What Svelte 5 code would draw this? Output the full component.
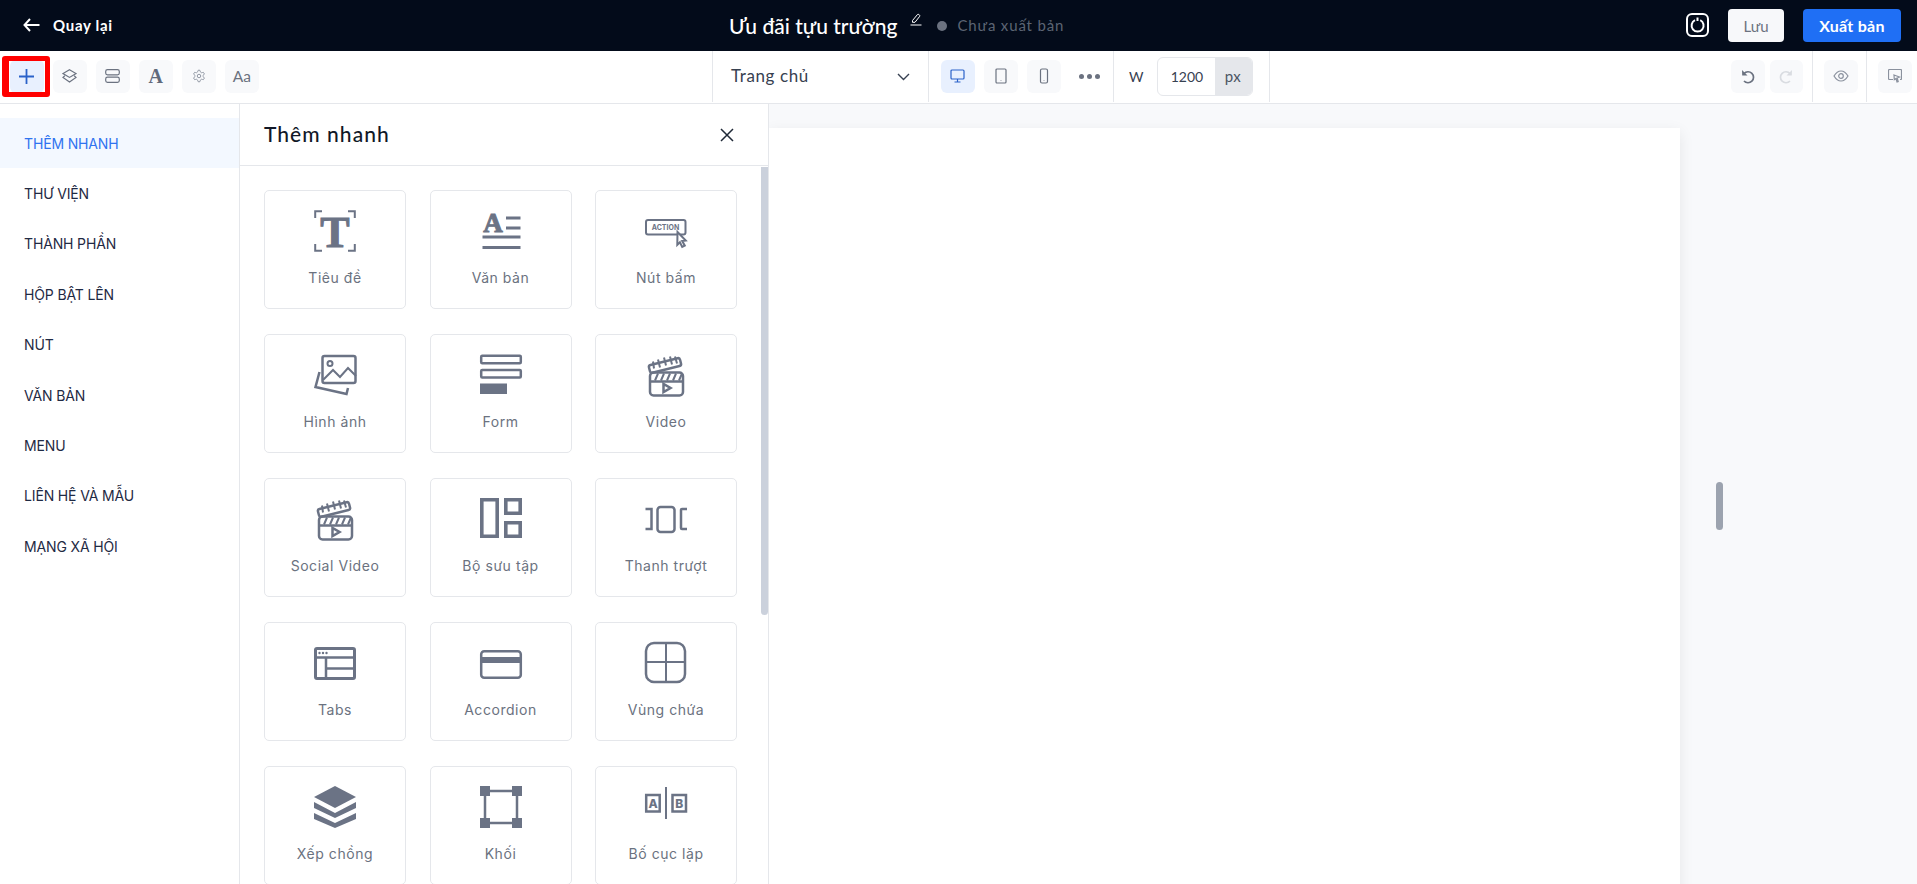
<script>
  const menu = ['THÊM NHANH','THƯ VIỆN','THÀNH PHẦN','HỘP BẬT LÊN','NÚT','VĂN BẢN','MENU','LIÊN HỆ VÀ MẪU','MẠNG XÃ HỘI'];
  const items = [
    ['title','Tiêu đề'],['text','Văn bản'],['button','Nút bấm'],
    ['image','Hình ảnh'],['form','Form'],['video','Video'],
    ['video','Social Video'],['gallery','Bộ sưu tập'],['slider','Thanh trượt'],
    ['tabs','Tabs'],['accordion','Accordion'],['container','Vùng chứa'],
    ['stack','Xếp chồng'],['block','Khối'],['repeat','Bố cục lặp']
  ];
</script>

{#snippet icon(name)}
  <svg class="ico" viewBox="0 0 42 42" aria-hidden="true">
    {#if name === 'title'}
      <path class="s" d="M1.200 8V1.200H8M34 1.200h6.800V8M1.200 34v6.800H8M34 40.800h6.800V34"/>
      <text class="serif tt" x="21" y="37" text-anchor="middle" font-size="44">T</text>
    {:else if name === 'text'}
      <text class="serif tt" x="13" y="21.500" text-anchor="middle" font-size="27">A</text>
      <path class="s3" d="M26 8h14.500M26 18h14.500M2.500 27h38M2.500 37.500h38"/>
    {:else if name === 'button'}
      <rect class="s2" x="1" y="10" width="39.500" height="14.500" rx="2"/>
      <text class="act" x="20.500" y="20" text-anchor="middle">ACTION</text>
      <path class="arrow" d="M32.500 22l8.300 8.500-3.600.6 2.600 4.600-2.600 1.300-2.300-4.700-2.600 2.600z"/>
    {:else if name === 'image'}
      <rect class="s25" x="8.500" y="2" width="33" height="27" rx="2"/>
      <circle class="s" cx="16" cy="9.500" r="2.500"/>
      <path class="s" d="M9 26l10-10 7 7 8-9 8 8"/>
      <path class="s25" d="M5.500 18L1.500 33l31 7 1.500-6"/>
    {:else if name === 'form'}
      <rect class="s25" x="1.200" y="1.700" width="39.600" height="7.600" rx="1"/>
      <rect class="s25" x="1.200" y="16" width="39.600" height="7.600" rx="1"/>
      <rect class="f" x="0" y="29.500" width="27" height="10.500"/>
    {:else if name === 'video'}
      <g transform="translate(3 0.500)">
        <rect class="s25" x="2" y="18" width="33" height="23" rx="3.500"/>
        <path class="s25" d="M2 27h33"/>
        <path class="s2" d="M7 26l3-7M13 26l3-7M19 26l3-7M25 26l3-7M31 26l3-7"/>
        <rect class="s25" x="1" y="7" width="32" height="8" rx="2" transform="rotate(-14 17 11)"/>
        <path class="s2" d="M6 14l-1-7M12 13l-2-8M18 11l-2-8M24 10l-2-8M29 9l-2-7"/>
        <path class="s25" d="M15.500 29.500v8l7-4z"/>
      </g>
    {:else if name === 'gallery'}
      <path class="s35" d="M1.800 1.800h15.400v36.400H1.800zM25.800 1.800h14.400v13.400H25.800zM25.800 24.800h14.400v13.400H25.800z"/>
    {:else if name === 'slider'}
      <rect class="s25" x="12.500" y="9" width="17" height="25" rx="3"/>
      <path class="s25" d="M0.500 11h6v20h-6M42 11h-5a1 1 0 0 0-1 1v18a1 1 0 0 0 1 1h5"/>
    {:else if name === 'tabs'}
      <rect class="s3" x="1.500" y="6.500" width="39" height="30" rx="1.500"/>
      <path class="s25" d="M1 15.500h40M12 15.500v21M12 26.500h29"/>
      <circle class="f" cx="5.500" cy="11" r="1.200"/><circle class="f" cx="9" cy="11" r="1.200"/><circle class="f" cx="12.500" cy="11" r="1.200"/>
    {:else if name === 'accordion'}
      <rect class="s25" x="1.200" y="9.200" width="39.600" height="26.600" rx="3"/>
      <rect class="f" x="1" y="15" width="40" height="6"/>
    {:else if name === 'container'}
      <rect class="s25" x="1" y="1" width="39" height="39" rx="8"/>
      <path class="s2" d="M21 1v39M1 20h39"/>
    {:else if name === 'stack'}
      <path class="f" d="M21 0l21 11-21 11L0 11z"/>
      <path class="f" d="M0 16l21 11 21-11v6L21 32 0 22zM0 27l21 10 21-10v6L21 42 0 33z"/>
    {:else if name === 'block'}
      <path class="s25" d="M5 5h32v32H5z"/>
      <path class="f" d="M0 0h10v10H0zM32 0h10v10H32zM0 32h10v10H0zM32 32h10v10H32z"/>
    {:else if name === 'repeat'}
      <rect class="s25" x="1.200" y="9" width="13.500" height="16.500"/>
      <rect class="s25" x="27.500" y="9" width="13.500" height="16.500"/>
      <path class="s2" d="M21 1v32"/>
      <text class="ab" x="8" y="22" text-anchor="middle">A</text>
      <text class="ab" x="34.300" y="22" text-anchor="middle">B</text>
    {/if}
  </svg>
{/snippet}

<div class="app">
  <header class="topbar">
    <div class="back">
      <svg width="17" height="14" viewBox="0 0 17 14" class="wh"><path d="M7 1L1.500 7 7 13M1.500 7H16.500"/></svg>
      <span>Quay lại</span>
    </div>
    <div class="doc">
      <span class="title">Ưu đãi tựu trường</span>
      <svg width="12" height="13" viewBox="0 0 12 13" class="pen"><path d="M2.500 7.500L7.500 1.500c.8-.7 2.800 .6 2.200 1.800L5 9.300H2.500zM0.500 12h11"/></svg>
      <i class="dot"></i>
      <span class="status">Chưa xuất bản</span>
    </div>
    <div class="actions">
      <svg width="23" height="24" viewBox="0 0 23 24" class="wh2">
        <rect x="1" y="1" width="21" height="22" rx="5"/>
        <path d="M9 7.200a6 6 0 1 0 5.200 0M11.500 4.500v3.500"/>
      </svg>
      <button class="save">Lưu</button>
      <button class="publish">Xuất bản</button>
    </div>
  </header>

  <div class="toolbar">
    <section class="tools">
      <button class="tb plus">
        <svg width="15" height="15" viewBox="0 0 15 15"><path d="M7.500 0v15M0 7.500h15" stroke="#2a62c9" stroke-width="1.800" fill="none"/></svg>
      </button>
      <button class="tb">
        <svg width="15" height="14" viewBox="0 0 15 14" class="ti"><path d="M7.500 .8l6.500 3.800-6.500 3.800L1 4.600zM2.800 6.700L1 8.400 7.500 13 14 8.400l-1.800-1.700"/></svg>
      </button>
      <button class="tb">
        <svg width="15" height="14" viewBox="0 0 15 14" class="ti"><rect x=".7" y=".7" width="13.600" height="5.100" rx="1.800"/><rect x=".7" y="8.200" width="13.600" height="5.100" rx="1.800"/></svg>
      </button>
      <button class="tb big-a">A</button>
      <button class="tb">
        <svg width="14" height="14" viewBox="0 0 24 24" class="gear"><circle cx="12" cy="12" r="3"/><path d="M12.220 2h-.44a2 2 0 0 0-2 2v.18a2 2 0 0 1-1 1.730l-.43.25a2 2 0 0 1-2 0l-.15-.08a2 2 0 0 0-2.730.73l-.22.38a2 2 0 0 0 .73 2.730l.15.1a2 2 0 0 1 1 1.720v.51a2 2 0 0 1-1 1.740l-.15.09a2 2 0 0 0-.73 2.730l.22.38a2 2 0 0 0 2.730.73l.15-.08a2 2 0 0 1 2 0l.43.25a2 2 0 0 1 1 1.730V20a2 2 0 0 0 2 2h.44a2 2 0 0 0 2-2v-.18a2 2 0 0 1 1-1.730l.43-.25a2 2 0 0 1 2 0l.15.08a2 2 0 0 0 2.730-.73l.22-.39a2 2 0 0 0-.73-2.730l-.15-.08a2 2 0 0 1-1-1.740v-.5a2 2 0 0 1 1-1.740l.15-.09a2 2 0 0 0 .73-2.730l-.22-.38a2 2 0 0 0-2.730-.73l-.15.08a2 2 0 0 1-2 0l-.43-.25a2 2 0 0 1-1-1.730V4a2 2 0 0 0-2-2z"/></svg>
      </button>
      <button class="tb aa">Aa</button>
    </section>
    <section class="page-sel">
      <span>Trang chủ</span>
      <svg width="13" height="8" viewBox="0 0 13 8" class="chev"><path d="M1 1l5.500 5.500L12 1"/></svg>
    </section>
    <section class="devices">
      <button class="tb on">
        <svg width="15" height="14" viewBox="0 0 15 14" class="blue"><rect x="1" y="1" width="13" height="9" rx="1"/><path d="M7.500 10v3M4.500 13h6"/></svg>
      </button>
      <button class="tb">
        <svg width="12" height="16" viewBox="0 0 12 16" class="ti"><rect x="1" y="1" width="10" height="14" rx="1"/><path d="M6 12.500v.4"/></svg>
      </button>
      <button class="tb">
        <svg width="10" height="16" viewBox="0 0 10 16" class="ti"><rect x="1.500" y="1" width="7" height="14" rx="1.500"/><path d="M5 12.500v.4"/></svg>
      </button>
      <span class="dots"><i></i><i></i><i></i></span>
    </section>
    <section class="width">
      <span class="w">W</span>
      <div class="field"><span class="val">1200</span><span class="unit">px</span></div>
    </section>
    <section class="history">
      <button class="tb">
        <svg width="14" height="16" viewBox="0 0 14 16" class="undo"><path d="M3 5.500a5.500 5.500 0 1 1 0 7.500"/><path class="tri" d="M1 2l.2 5.500h5.300z"/></svg>
      </button>
      <button class="tb">
        <svg width="14" height="16" viewBox="0 0 14 16" class="undo off"><path d="M11 5.500a5.500 5.500 0 1 0 0 7.500"/><path class="tri" d="M13 2l-.2 5.500H7.500z"/></svg>
      </button>
    </section>
    <section class="single">
      <button class="tb">
        <svg width="16" height="12" viewBox="0 0 16 12" class="ti light"><path d="M1 6c2-3.300 4.300-5 7-5s5 1.700 7 5c-2 3.300-4.300 5-7 5S3 9.300 1 6z"/><circle cx="8" cy="6" r="2.300"/></svg>
      </button>
    </section>
    <section class="single last">
      <button class="tb">
        <svg width="14" height="14" viewBox="0 0 14 14" class="ti light"><path d="M5 10.500H1.500a1 1 0 0 1-1-1v-8a1 1 0 0 1 1-1h11a1 1 0 0 1 1 1v8a1 1 0 0 1-1 1H12"/><path d="M6 6l5.500 2-2.300 1 1 3.500-1.200.4-1-3.400-1.700 1.200z"/></svg>
      </button>
    </section>
    <div class="mark"></div>
  </div>

  <div class="main">
    <nav class="side">
      {#each menu as m, i}
        <div class="mi" class:active={i === 0}>{m}</div>
      {/each}
    </nav>
    <aside class="panel">
      <div class="ph">
        <h2>Thêm nhanh</h2>
        <svg width="14" height="14" viewBox="0 0 14 14" class="x"><path d="M1 1l12 12M13 1L1 13"/></svg>
      </div>
      <div class="pb">
        <div class="grid">
          {#each items as [ic, label]}
            <div class="card">
              {@render icon(ic)}
              <span>{label}</span>
            </div>
          {/each}
        </div>
        <div class="sb"></div>
      </div>
    </aside>
    <main class="canvas">
      <div class="sheet"></div>
      <div class="thumb"></div>
    </main>
  </div>
</div>

<style>
  :global(body) { margin: 0; overflow: hidden; background: #fff; }
  .app { width: 1917px; height: 884px; display: flex; flex-direction: column; overflow: hidden; font-family: Inter, "Noto Sans", sans-serif; color: #1f2937; }
  button { font: inherit; border: 0; padding: 0; cursor: pointer; }

  .topbar { height: 51px; flex: none; background: #030b1a; display: flex; align-items: center; color: #fff; }
  .back { display: flex; align-items: center; gap: 13px; width: 729px; padding-left: 23px; box-sizing: border-box; font-family: Lato, sans-serif; font-size: 15px; font-weight: 700; letter-spacing: .7px; }
  .back span { margin-top: -1px; }
  .wh { fill: none; stroke: #fff; stroke-width: 2; margin-top: -2px; }
  .doc { display: flex; align-items: center; flex: 1; }
  .title { font-family: Lato, sans-serif; font-size: 21px; font-weight: 500; margin-top: -1px; }
  .pen { fill: none; stroke: #fff; stroke-width: 1; margin: -13px 15px 0 13px; }
  .dot { width: 10px; height: 10px; border-radius: 50%; background: #6b7280; margin-right: 10px; }
  .status { font-family: Lato, sans-serif; font-size: 15px; color: #5c6473; letter-spacing: .85px; margin-top: -1px; }
  .actions { display: flex; align-items: center; padding-right: 16px; }
  .wh2 { fill: none; stroke: #fff; stroke-width: 2; margin-right: 19px; margin-top: -2px; }
  .save { width: 56px; height: 33px; border-radius: 4px; background: #f7f8fa; color: #6b7280; font-family: Lato, sans-serif; font-size: 15px; margin-right: 19px; }
  .publish { width: 98px; height: 33px; border-radius: 4px; background: #1f6ff5; color: #fff; font-family: Lato, sans-serif; font-size: 16px; font-weight: 700; letter-spacing: .3px; }

  .toolbar { height: 53px; flex: none; box-sizing: border-box; border-bottom: 1px solid #e5e7eb; display: flex; position: relative; background: #fff; }
  .toolbar section { display: flex; align-items: center; box-sizing: border-box; height: 51px; border-left: 1px solid #e5e7eb; }
  .tb { width: 33.500px; height: 33px; flex: none; border-radius: 6px; background: #f8f9fb; color: #6b7280; display: flex; align-items: center; justify-content: center; margin-top: -1px; }
  .ti { fill: none; stroke: #6b7280; stroke-width: 1.200; }
  .ti.light { stroke: #8a919e; }
  .tools { width: 712px; padding-left: 10px; gap: 9.500px; border-left: 0 !important; }
  .plus { background: #e8f0fe; }
  .big-a { font-family: "Liberation Serif", serif; font-weight: 700; font-size: 20px; color: #616a7b; }
  .gear { fill: none; stroke: #8a919e; stroke-width: 1.600; }
  .aa { font-family: Lato, sans-serif; font-size: 15.500px; }
  .page-sel { width: 216px; padding: 0 18px; justify-content: space-between; font-family: Lato, sans-serif; font-size: 17px; letter-spacing: .6px; color: #374151; }
  .page-sel span { margin-top: -2px; }
  .chev { fill: none; stroke: #374151; stroke-width: 1.400; }
  .devices { width: 185px; padding-left: 12px; gap: 9.500px; }
  .on { background: #e8f0fe; }
  .blue { fill: none; stroke: #2a62c9; stroke-width: 1.200; }
  .dots { display: flex; gap: 3px; margin-left: 9px; margin-top: -1px; }
  .dots i { width: 5px; height: 5px; border-radius: 50%; background: #6b7280; }
  .width { width: 156px; padding-left: 15px; gap: 13px; font-size: 14px; font-family: Lato, sans-serif; }
  .w { color: #374151; }
  .field { width: 96px; height: 39px; box-sizing: border-box; border: 1px solid #e5e7eb; border-radius: 6px; display: flex; overflow: hidden; align-items: stretch; margin-top: -1px; }
  .val { flex: 1; display: flex; align-items: center; justify-content: center; color: #374151; padding-left: 2px; }
  .unit { width: 37px; background: #e5e7eb; display: flex; align-items: center; justify-content: center; color: #4b5563; font-size: 15px; letter-spacing: .5px; }
  .history { width: 543px; justify-content: flex-end; gap: 5px; padding-right: 9px; }
  .undo { fill: none; stroke: #6b7280; stroke-width: 1.700; }
  .undo .tri { fill: #6b7280; stroke: none; }
  .undo.off { stroke: #d9dce1; }
  .undo.off .tri { fill: #d9dce1; }
  .single { width: 54px; padding-left: 11px; }
  .single.last { width: 51px; }
  .mark { position: absolute; left: 2px; top: 5px; width: 48px; height: 41px; box-sizing: border-box; border-style: solid; border-color: #f00; border-width: 5px 5px 5px 7px; border-radius: 3px; }

  .main { flex: 1; display: flex; min-height: 0; }
  .side { width: 240px; flex: none; box-sizing: border-box; border-right: 1px solid #e5e7eb; padding-top: 14px; }
  .mi { height: 50.400px; display: flex; align-items: center; padding-left: 24px; font-size: 14px; letter-spacing: -.15px; color: #1f2a44; }
  .mi.active { background: #f3f8ff; color: #2f73f0; }
  .panel { width: 529px; flex: none; box-sizing: border-box; border-right: 1px solid #e5e7eb; display: flex; flex-direction: column; }
  .ph { height: 62px; flex: none; box-sizing: border-box; border-bottom: 1px solid #e5e7eb; display: flex; align-items: center; justify-content: space-between; padding: 0 34px 0 24px; }
  .ph h2 { margin: -2px 0 0; font-family: Lato, sans-serif; font-size: 21px; font-weight: 500; color: #111827; letter-spacing: 1.050px; }
  .x { fill: none; stroke: #1f2937; stroke-width: 1.500; }
  .pb { flex: 1; display: flex; min-height: 0; overflow: hidden; justify-content: space-between; }
  .grid { display: grid; grid-template-columns: 142px 142px 142px; grid-auto-rows: 119px; column-gap: 23.500px; row-gap: 25px; padding: 24px 0 0 24px; }
  .card { box-sizing: border-box; border: 1px solid #e5e7eb; border-radius: 5px; display: flex; flex-direction: column; align-items: center; padding-top: 19px; font-size: 14px; color: #6b7280; }
  .card span { margin-top: 16.500px; letter-spacing: .55px; }
  .ico { width: 42px; height: 42px; display: block; flex: none; color: #6b7385; overflow: visible; }
  .ico .s { fill: none; stroke: currentColor; stroke-width: 2; }
  .ico .s2 { fill: none; stroke: currentColor; stroke-width: 2; }
  .ico .s25 { fill: none; stroke: currentColor; stroke-width: 2.500; }
  .ico .s3 { fill: none; stroke: currentColor; stroke-width: 3; }
  .ico .s35 { fill: none; stroke: currentColor; stroke-width: 3.600; }
  .ico .f { fill: currentColor; }
  .ico .arrow { fill: #fff; stroke: currentColor; stroke-width: 2; }
  .ico .serif { font-family: "Liberation Serif", serif; font-weight: 700; fill: currentColor; }
  .ico .tt { stroke: currentColor; stroke-width: 1; }
  .ico .act { font-family: Inter, sans-serif; font-weight: 700; font-size: 7px; fill: currentColor; }
  .ico .ab { font-family: Inter, sans-serif; font-weight: 800; font-size: 12px; fill: currentColor; }
  .sb { width: 7px; height: 448px; margin-top: 1px; background: #cbd1dc; border-radius: 0 0 4px 4px; flex: none; }
  .canvas { flex: 1; background: #f8f9fb; padding-top: 24px; position: relative; overflow: hidden; }
  .sheet { width: 911px; height: 900px; background: #fff; box-shadow: 0 4px 14px rgba(0,0,0,.08); }
  .thumb { position: absolute; left: 947px; top: 378px; width: 7px; height: 48px; border-radius: 4px; background: #9ca3af; }
</style>
